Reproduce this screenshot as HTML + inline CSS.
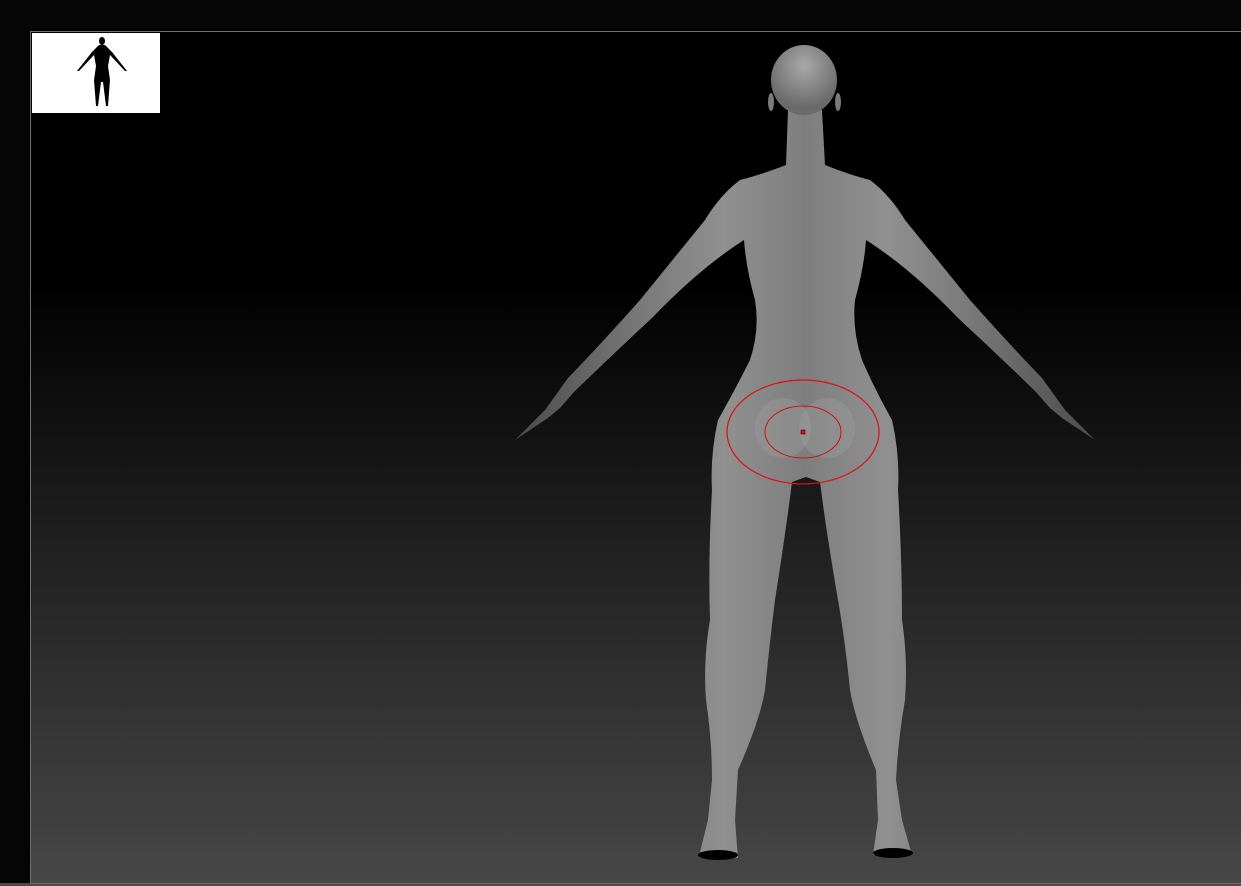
<!DOCTYPE html>
<html><head><style>
html,body{margin:0;padding:0;width:1241px;height:886px;overflow:hidden;background:#050505}
.vp{position:absolute;left:30px;top:31px;width:1215px;height:851px;border:1px solid #6e6e6e;border-right:none;background:linear-gradient(#000 0px,#000 250px,#1c1c1c 480px,#474747 851px)}
.bot{position:absolute;left:0;top:883px;width:1241px;height:3px;background:#4a4a4a}
.thumb{position:absolute;left:32px;top:33px;width:128px;height:80px;background:#fff}
svg{position:absolute;left:0;top:0}
</style></head><body>
<div class="bot"></div>
<div class="vp"></div>
<div class="thumb"></div>
<svg width="1241" height="886" viewBox="0 0 1241 886">
<defs>
<linearGradient id="g" x1="0" x2="1" y1="0" y2="0">
<stop offset="0" stop-color="#4a4a4a"/><stop offset="0.22" stop-color="#7a7a7a"/><stop offset="0.36" stop-color="#909090"/><stop offset="0.5" stop-color="#7e7e7e"/><stop offset="0.64" stop-color="#909090"/><stop offset="0.78" stop-color="#7a7a7a"/><stop offset="1" stop-color="#4a4a4a"/>
</linearGradient>
<radialGradient id="h" cx="0.5" cy="0.3" r="0.6"><stop offset="0" stop-color="#a8a8a8"/><stop offset="1" stop-color="#6a6a6a"/></radialGradient>
</defs>
<g fill="#000">
<ellipse cx="102" cy="41" rx="3" ry="4"/>
<path d="M99 45 L105 45 L112 52 L127 71 L125 71 L110 55 L108 66 L110 80 L108 106 L106 106 L103 82 L101 82 L98 106 L96 106 L94 80 L96 66 L94 55 L79 71 L77 71 L92 52 Z"/>
</g>
<path fill="url(#g)" d="M788 110 L786 165 Q760 175 740 180 Q720 195 705 220 L640 300 Q600 345 568 378 L545 410 L515 440 L548 418 L560 408 L574 392 Q612 355 652 318 Q700 268 744 240 Q746 268 755 300 Q760 330 750 360 Q735 390 718 420 Q710 455 712 490 Q708 560 710 620 Q703 660 706 700 Q712 740 712 780 L708 820 L700 852 L738 858 L735 820 L738 770 Q760 720 765 690 Q770 640 775 600 Q786 530 792 482 L806 477 L820 482 Q826 530 838 600 Q845 640 850 690 Q855 720 876 770 L878 820 L873 855 L912 855 L902 820 L896 780 Q898 740 905 700 Q908 660 902 620 Q902 560 898 490 Q900 455 892 420 Q875 390 862 360 Q852 330 855 300 Q864 268 866 240 Q910 268 958 318 Q998 355 1036 392 L1050 408 L1062 418 L1095 440 L1065 410 L1042 378 Q1010 345 970 300 L905 220 Q890 195 870 180 Q850 175 825 165 L822 110 Z"/>
<ellipse cx="804" cy="80" rx="33" ry="35" fill="url(#h)"/>
<ellipse cx="771" cy="102" rx="3" ry="9" fill="#7a7a7a"/>
<ellipse cx="838" cy="102" rx="3" ry="9" fill="#7a7a7a"/>
<ellipse cx="783" cy="428" rx="28" ry="30" fill="#a0a0a0" opacity="0.35"/>
<ellipse cx="827" cy="428" rx="28" ry="30" fill="#a0a0a0" opacity="0.35"/>
<ellipse cx="718" cy="855" rx="20" ry="5" fill="#000"/>
<ellipse cx="893" cy="853" rx="20" ry="5" fill="#000"/>
<ellipse cx="803" cy="432" rx="76" ry="52" fill="none" stroke="#e01010" stroke-width="1.2"/>
<ellipse cx="803" cy="432" rx="38" ry="26" fill="none" stroke="#d01010" stroke-width="1"/>
<rect x="801" y="430" width="4" height="4" fill="#ff0000" stroke="#000" stroke-width="0.5"/>
</svg>
</body></html>
